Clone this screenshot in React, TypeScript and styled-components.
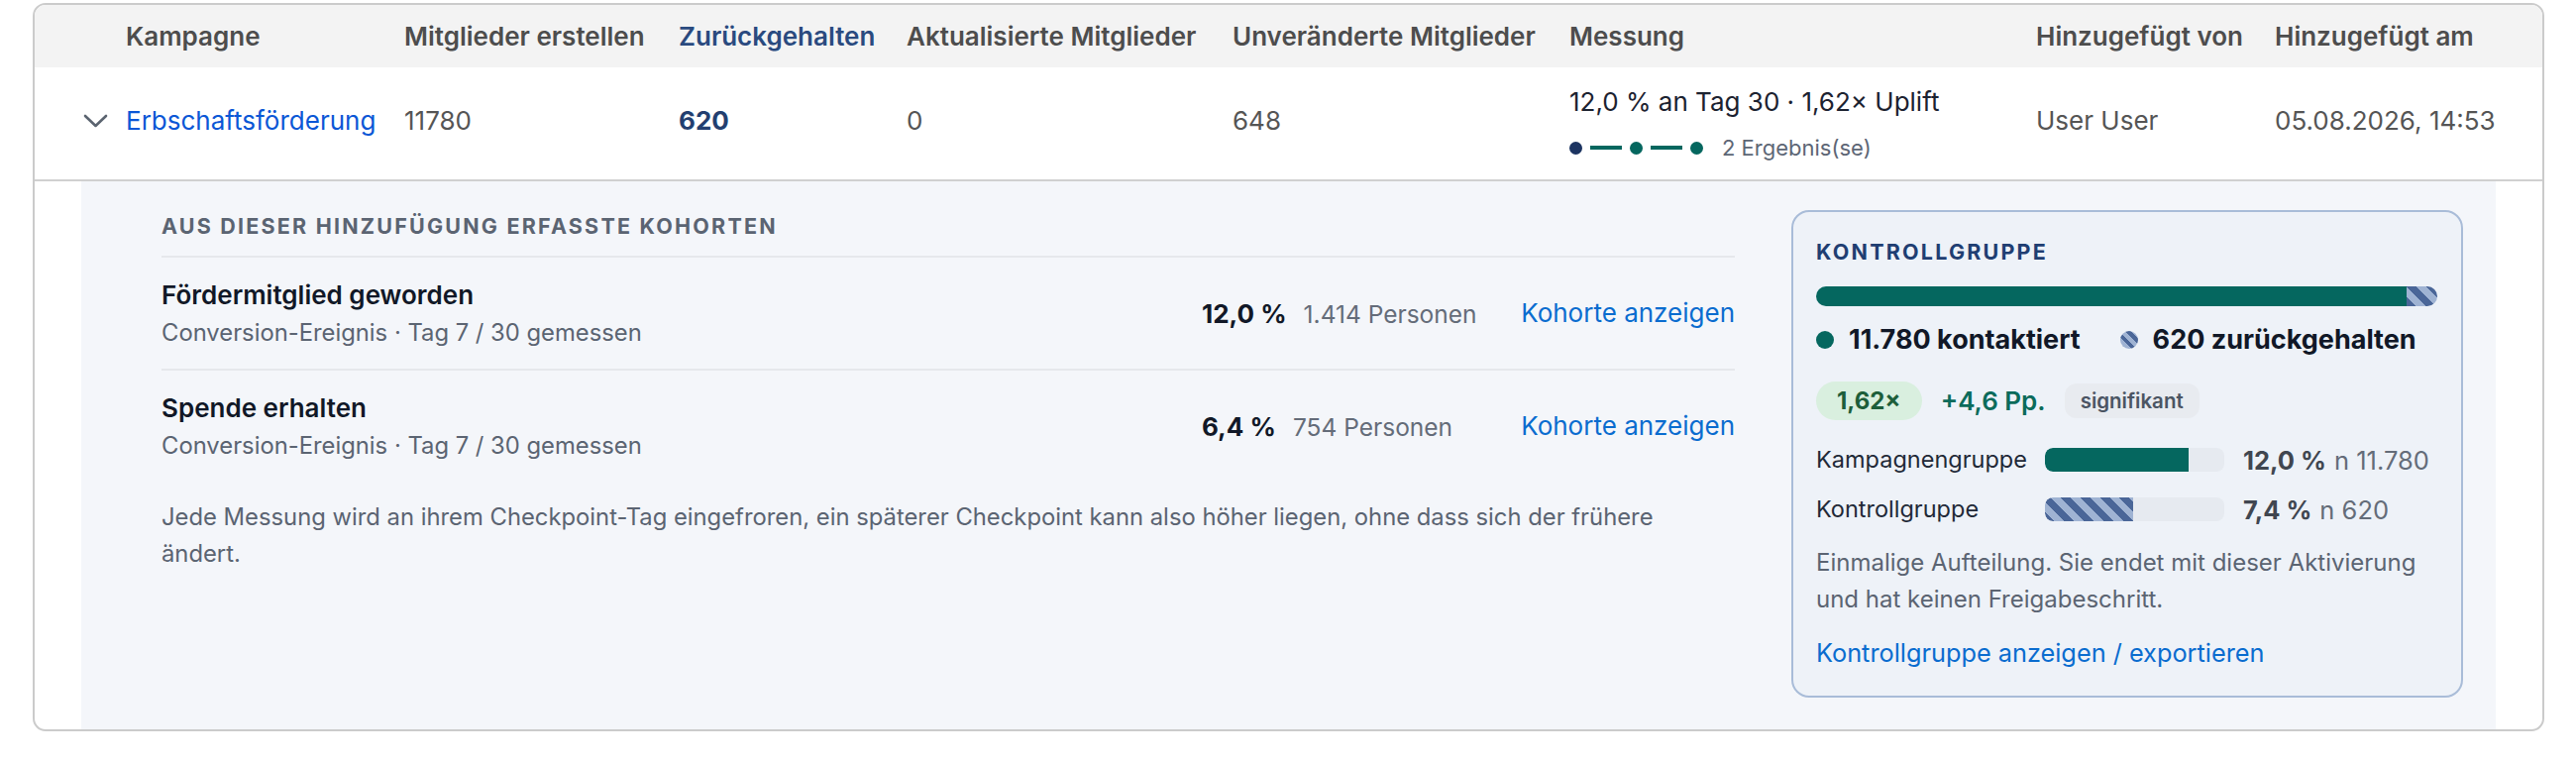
import React from 'react';
import styled, { createGlobalStyle, css } from 'styled-components';

const GlobalStyle = createGlobalStyle`
  * { box-sizing: border-box; }
  body {
    margin: 0;
    background: #ffffff;
    font-family: Inter, "Noto Sans", "Liberation Sans", sans-serif;
    color: #1f2937;
  }
`;

const stripes = css`
  background: repeating-linear-gradient(
    45deg,
    #4a6698 0px,
    #4a6698 7px,
    #9fb3d3 7px,
    #9fb3d3 14px
  );
`;

const columns = css`
  display: grid;
  grid-template-columns: 92px 281px 277px 230px 329px 340px 471px 241px 1fr;
`;

const Page = styled.div`
  padding: 3px 32px 0 33px;
`;

const TableCard = styled.div`
  border: 2px solid #cbcbcb;
  border-radius: 13px;
  overflow: hidden;
  background: #ffffff;
`;

const HeaderRow = styled.div`
  ${columns};
  height: 63px;
  align-items: center;
  background: #f3f3f3;
`;

const HeadCell = styled.div<{ $accent?: boolean }>`
  font-size: 26px;
  line-height: 36px;
  font-weight: 600;
  white-space: nowrap;
  color: ${({ $accent }) => ($accent ? '#2a4a7f' : '#4d4d4d')};
`;

const DataRow = styled.div`
  ${columns};
  height: 115px;
  align-items: center;
  border-bottom: 2px solid #d0d0d0;
`;

const Cell = styled.div<{ $strong?: boolean }>`
  padding-bottom: 5px;
  font-size: 26px;
  line-height: 36px;
  white-space: nowrap;
  color: ${({ $strong }) => ($strong ? '#233f70' : '#555555')};
  font-weight: ${({ $strong }) => ($strong ? 700 : 400)};
`;

const ToggleCell = styled.div`
  padding: 0 0 5px 49px;
  display: flex;
  align-items: center;
`;

const CampaignLink = styled.a`
  padding-bottom: 5px;
  font-size: 26px;
  line-height: 36px;
  color: #0b57d6;
  text-decoration: none;
  white-space: nowrap;
`;

const MeasureCell = styled.div`
  display: flex;
  flex-direction: column;
  gap: 13px;
`;

const MeasureText = styled.div`
  font-size: 26px;
  line-height: 36px;
  color: #1c2230;
  white-space: nowrap;
`;

const Timeline = styled.div`
  display: flex;
  align-items: center;
  gap: 8px;
  height: 30px;
`;

const TimelineDot = styled.span<{ $first?: boolean }>`
  width: 13px;
  height: 13px;
  border-radius: 50%;
  background: ${({ $first }) => ($first ? '#1c3461' : '#05675f')};
`;

const TimelineLine = styled.span`
  width: 32px;
  height: 4px;
  background: #05675f;
`;

const TimelineLabel = styled.span`
  margin-left: 11px;
  font-size: 22px;
  color: #5d6675;
  white-space: nowrap;
`;

const Panel = styled.div`
  margin: 0 47px;
  padding: 29px 33px 32px 81px;
  background: #f4f6fa;
  display: grid;
  grid-template-columns: 1fr 678px;
  column-gap: 57px;
  align-items: start;
`;

const SectionHeading = styled.div<{ $navy?: boolean }>`
  font-size: 21.5px;
  line-height: 32px;
  font-weight: 700;
  letter-spacing: 2.2px;
  text-transform: uppercase;
  color: ${({ $navy }) => ($navy ? '#1f3e72' : '#5b6472')};
`;

const CohortList = styled.div`
  margin-top: 14px;
`;

const CohortRow = styled.div`
  display: grid;
  grid-template-columns: 1fr 328px 210px;
  align-items: center;
  padding: 20px 0;
  border-top: 2px solid #e6e8ec;
`;

const CohortTitle = styled.div`
  font-size: 26px;
  line-height: 36px;
  font-weight: 600;
  color: #111827;
`;

const CohortMeta = styled.div`
  margin-top: 4px;
  font-size: 23.8px;
  line-height: 32px;
  color: #5b6472;
`;

const CohortStats = styled.div`
  display: flex;
  align-items: baseline;
  gap: 17px;
  white-space: nowrap;
`;

const Percent = styled.span`
  font-size: 26px;
  font-weight: 700;
  color: #111827;
`;

const Count = styled.span`
  font-size: 24.5px;
  color: #646c79;
`;

const TextLink = styled.a`
  font-size: 26px;
  line-height: 36px;
  color: #0a6ccf;
  text-decoration: none;
  white-space: nowrap;
  justify-self: end;
`;

const Note = styled.p`
  margin: 18px 0 0;
  max-width: 1540px;
  font-size: 23.8px;
  line-height: 36.6px;
  color: #5b6472;
`;

const ControlCard = styled.div`
  background: #eef2f8;
  border: 2px solid #a9bcd8;
  border-radius: 18px;
  padding: 24px 24px 25px 23px;
`;

const StackBar = styled.div`
  margin-top: 19px;
  height: 20px;
  border-radius: 10px;
  overflow: hidden;
  display: flex;
`;

const StackSegment = styled.div<{ $held?: boolean }>`
  height: 100%;
  ${({ $held }) => ($held ? stripes : css`background: #05675f;`)}
`;

const Legend = styled.div`
  margin-top: 16px;
  display: flex;
  align-items: center;
  gap: 40px;
`;

const LegendItem = styled.div`
  display: flex;
  align-items: center;
  gap: 15px;
  font-size: 27px;
  line-height: 36px;
  font-weight: 700;
  color: #111827;
  white-space: nowrap;
`;

const LegendDot = styled.span<{ $held?: boolean }>`
  width: 18px;
  height: 18px;
  border-radius: 50%;
  flex-shrink: 0;
  background: ${({ $held }) =>
    $held ? 'repeating-linear-gradient(45deg, #4a6698 0 4px, #9fb3d3 4px 8px)' : '#05675f'};
`;

const UpliftRow = styled.div`
  margin-top: 24px;
  display: flex;
  align-items: center;
  gap: 19px;
`;

const UpliftPill = styled.span`
  height: 39px;
  padding: 0 21px;
  border-radius: 20px;
  background: #d9efdf;
  color: #1d5e3a;
  font-size: 24px;
  font-weight: 700;
  display: inline-flex;
  align-items: center;
`;

const Delta = styled.span`
  font-size: 26px;
  font-weight: 600;
  color: #0b6b5b;
`;

const SignificanceChip = styled.span`
  height: 35px;
  padding: 0 16px;
  border-radius: 12px;
  background: #e8ebf0;
  color: #4b5563;
  font-size: 20.5px;
  font-weight: 600;
  display: inline-flex;
  align-items: center;
`;

const GroupBars = styled.div`
  margin-top: 22px;
  display: grid;
  grid-template-columns: 212px 181px 196px;
  column-gap: 19px;
  row-gap: 14px;
  align-items: center;
`;

const GroupLabel = styled.div`
  font-size: 23.5px;
  line-height: 36px;
  color: #1f2937;
  white-space: nowrap;
`;

const Track = styled.div`
  height: 24px;
  border-radius: 8px;
  background: #e6eaf0;
  overflow: hidden;
`;

const Fill = styled.div<{ $held?: boolean }>`
  height: 100%;
  border-radius: 8px 0 0 8px;
  ${({ $held }) => ($held ? stripes : css`background: #05675f;`)}
`;

const GroupValue = styled.div`
  display: flex;
  align-items: baseline;
  gap: 8px;
  white-space: nowrap;
`;

const GroupPercent = styled.span`
  font-size: 25.5px;
  font-weight: 700;
  color: #404650;
`;

const GroupN = styled.span`
  font-size: 25.5px;
  color: #646c79;
`;

const CardNote = styled.p`
  margin: 18px 0 0;
  font-size: 24px;
  line-height: 36.6px;
  color: #5b6472;
`;

const CardLink = styled.a`
  display: block;
  margin-top: 18px;
  font-size: 25.3px;
  line-height: 36px;
  color: #0a6ccf;
  text-decoration: none;
`;

const Chevron = () => (
  <svg width="25" height="16" viewBox="0 0 25 16" fill="none">
    <polyline
      points="2,3 12.5,13 23,3"
      stroke="#5b6470"
      strokeWidth="2.6"
      strokeLinecap="round"
      strokeLinejoin="round"
    />
  </svg>
);

const cohorts = [
  { title: 'Fördermitglied geworden', meta: 'Conversion-Ereignis · Tag 7 / 30 gemessen', pct: '12,0 %', people: '1.414 Personen' },
  { title: 'Spende erhalten', meta: 'Conversion-Ereignis · Tag 7 / 30 gemessen', pct: '6,4 %', people: '754 Personen' },
];

const contacted = 11780;
const heldBack = 620;
const barScale = 15; // bars are drawn against a 15 % ceiling

const groups = [
  { label: 'Kampagnengruppe', rate: 12.0, pct: '12,0 %', n: 'n 11.780', held: false },
  { label: 'Kontrollgruppe', rate: 7.4, pct: '7,4 %', n: 'n 620', held: true },
];

const App: React.FC = () => {
  const heldShare = (heldBack / (contacted + heldBack)) * 100;

  return (
    <>
      <GlobalStyle />
      <Page>
        <TableCard>
          <HeaderRow>
            <div />
            <HeadCell>Kampagne</HeadCell>
            <HeadCell>Mitglieder erstellen</HeadCell>
            <HeadCell $accent>Zurückgehalten</HeadCell>
            <HeadCell>Aktualisierte Mitglieder</HeadCell>
            <HeadCell>Unveränderte Mitglieder</HeadCell>
            <HeadCell>Messung</HeadCell>
            <HeadCell>Hinzugefügt von</HeadCell>
            <HeadCell>Hinzugefügt am</HeadCell>
          </HeaderRow>

          <DataRow>
            <ToggleCell>
              <Chevron />
            </ToggleCell>
            <CampaignLink href="#">Erbschaftsförderung</CampaignLink>
            <Cell>11780</Cell>
            <Cell $strong>620</Cell>
            <Cell>0</Cell>
            <Cell>648</Cell>
            <MeasureCell>
              <MeasureText>12,0 % an Tag 30 · 1,62× Uplift</MeasureText>
              <Timeline>
                <TimelineDot $first />
                <TimelineLine />
                <TimelineDot />
                <TimelineLine />
                <TimelineDot />
                <TimelineLabel>2 Ergebnis(se)</TimelineLabel>
              </Timeline>
            </MeasureCell>
            <Cell>User User</Cell>
            <Cell>05.08.2026, 14:53</Cell>
          </DataRow>

          <Panel>
            <div>
              <SectionHeading>Aus dieser Hinzufügung erfasste Kohorten</SectionHeading>
              <CohortList>
                {cohorts.map((c) => (
                  <CohortRow key={c.title}>
                    <div>
                      <CohortTitle>{c.title}</CohortTitle>
                      <CohortMeta>{c.meta}</CohortMeta>
                    </div>
                    <CohortStats>
                      <Percent>{c.pct}</Percent>
                      <Count>{c.people}</Count>
                    </CohortStats>
                    <TextLink href="#">Kohorte anzeigen</TextLink>
                  </CohortRow>
                ))}
              </CohortList>
              <Note>
                Jede Messung wird an ihrem Checkpoint-Tag eingefroren, ein späterer Checkpoint kann also höher
                liegen, ohne dass sich der frühere ändert.
              </Note>
            </div>

            <ControlCard>
              <SectionHeading $navy>Kontrollgruppe</SectionHeading>
              <StackBar>
                <StackSegment style={{ flexBasis: `${100 - heldShare}%` }} />
                <StackSegment $held style={{ flexBasis: `${heldShare}%` }} />
              </StackBar>
              <Legend>
                <LegendItem>
                  <LegendDot />
                  11.780 kontaktiert
                </LegendItem>
                <LegendItem>
                  <LegendDot $held />
                  620 zurückgehalten
                </LegendItem>
              </Legend>
              <UpliftRow>
                <UpliftPill>1,62×</UpliftPill>
                <Delta>+4,6 Pp.</Delta>
                <SignificanceChip>signifikant</SignificanceChip>
              </UpliftRow>
              <GroupBars>
                {groups.map((g) => (
                  <React.Fragment key={g.label}>
                    <GroupLabel>{g.label}</GroupLabel>
                    <Track>
                      <Fill $held={g.held} style={{ width: `${(g.rate / barScale) * 100}%` }} />
                    </Track>
                    <GroupValue>
                      <GroupPercent>{g.pct}</GroupPercent>
                      <GroupN>{g.n}</GroupN>
                    </GroupValue>
                  </React.Fragment>
                ))}
              </GroupBars>
              <CardNote>
                Einmalige Aufteilung. Sie endet mit dieser Aktivierung und hat keinen Freigabeschritt.
              </CardNote>
              <CardLink href="#">Kontrollgruppe anzeigen / exportieren</CardLink>
            </ControlCard>
          </Panel>
        </TableCard>
      </Page>
    </>
  );
};

export default App;
